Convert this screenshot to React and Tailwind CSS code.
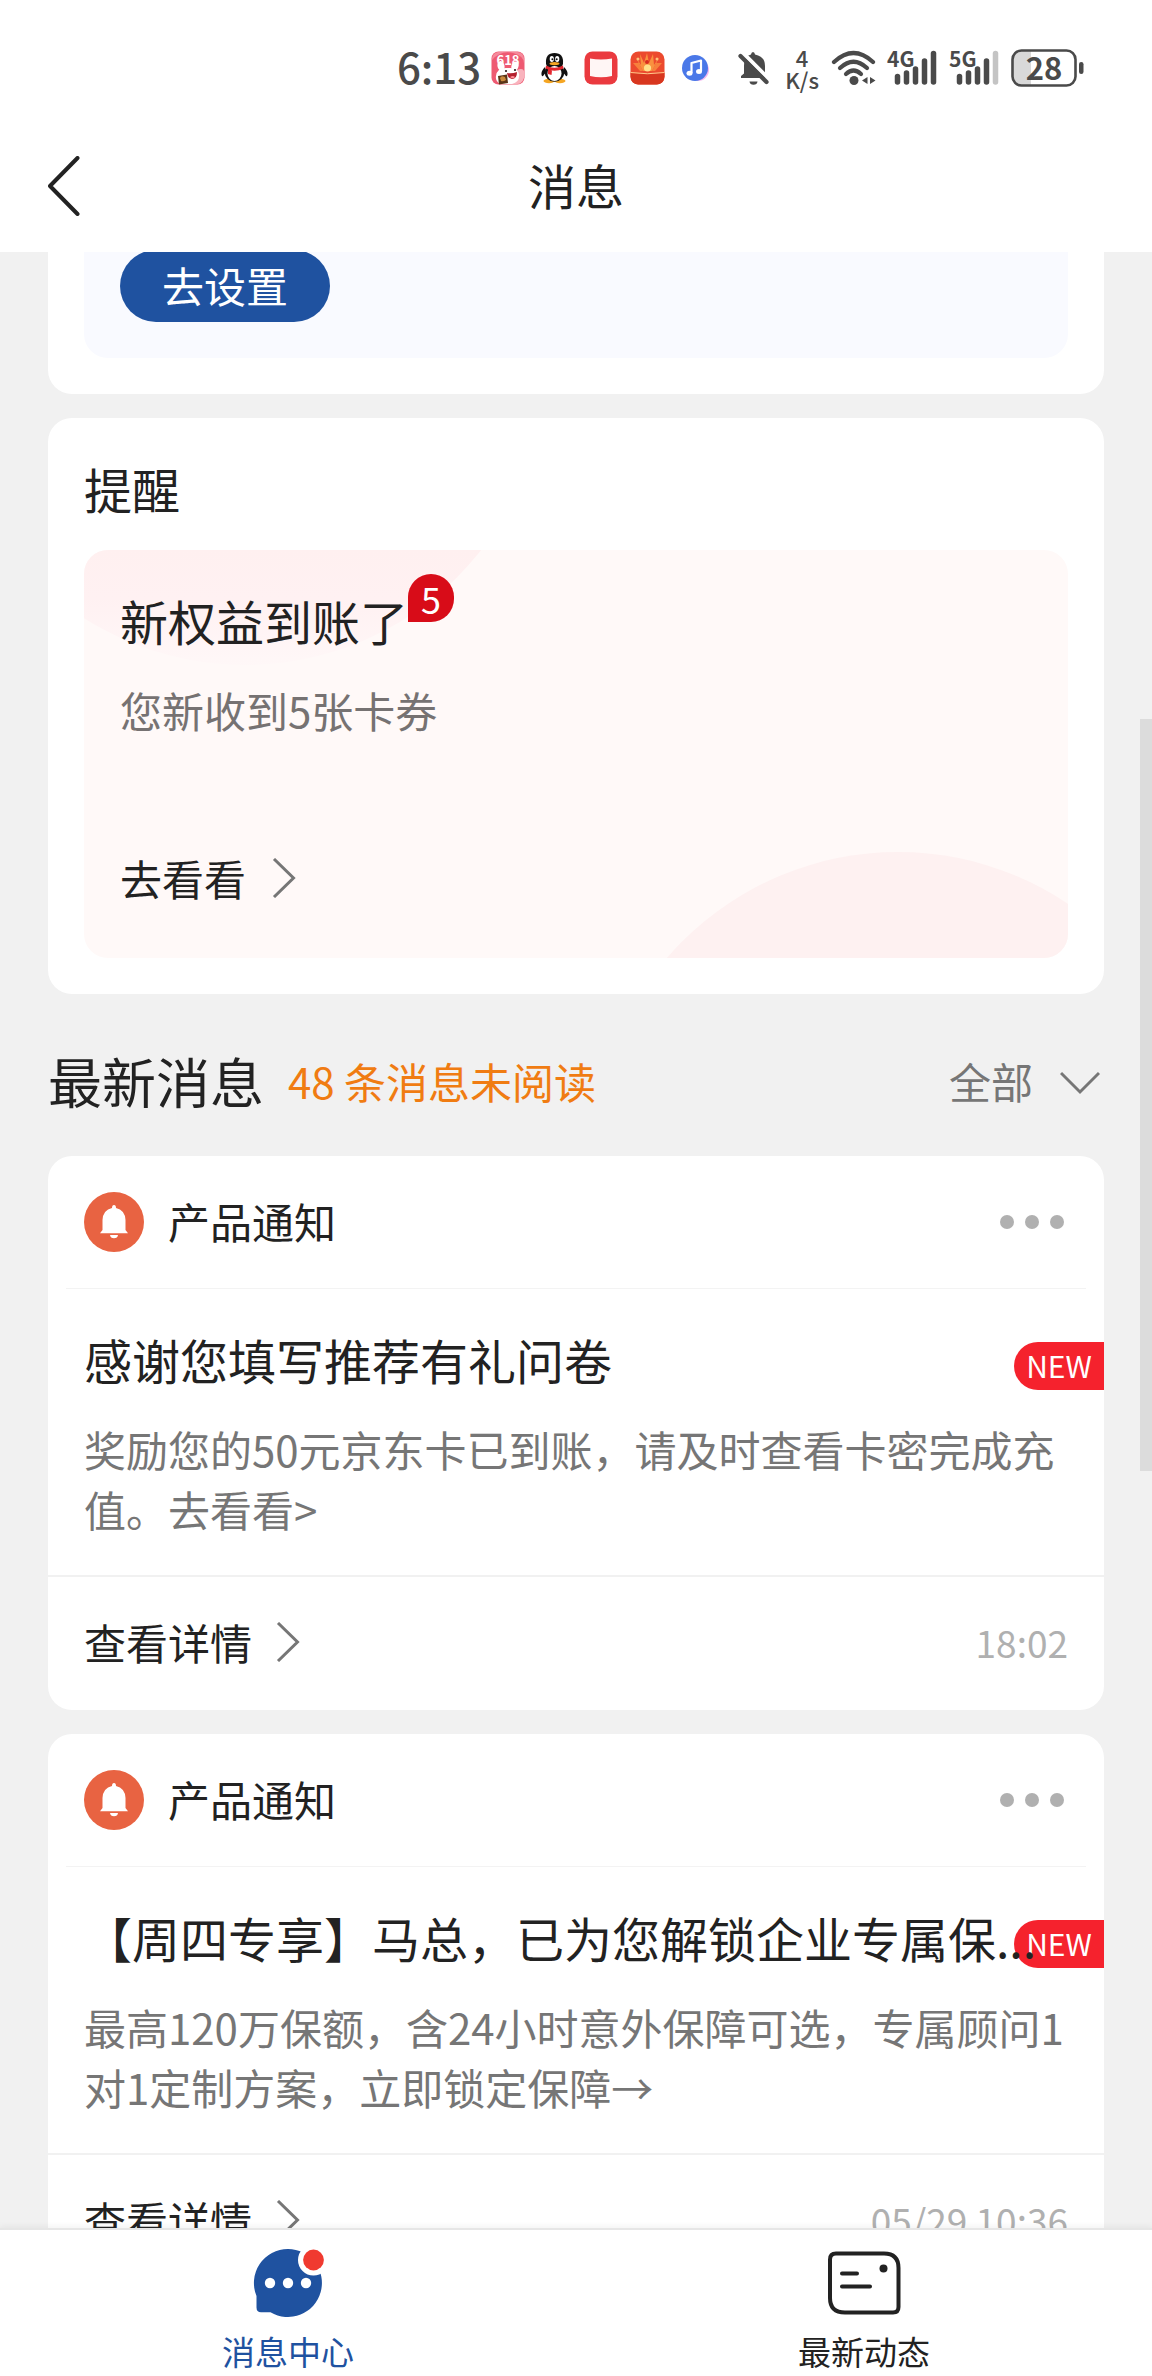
import React from "react";

const messages = [
  {
    id: 1,
    category: "产品通知",
    title: "感谢您填写推荐有礼问卷",
    text: "奖励您的50元京东卡已到账，请及时查看卡密完成充值。去看看>",
    time: "18:02",
  },
  {
    id: 2,
    category: "产品通知",
    title: "【周四专享】马总，已为您解锁企业专属保...",
    text: "最高120万保额，含24小时意外保障可选，专属顾问1对1定制方案，立即锁定保障→",
    time: "05/29 10:36",
  },
];

function ShopIcon() {
  return (
    <svg className="h-[34px] w-[34px]" viewBox="0 0 34 34" aria-hidden="true">
      <rect x="0.5" y="0.5" width="33" height="33" rx="7" fill="#ee5a72" />
      <path d="M1 9Q10 -1 22 2T33 14V7Q32 1 26 1H7Q1 2 1 9Z" fill="#f58a9b" />
      <path d="M23 20Q32 16 33 20V27Q31 33 26 33H18Z" fill="#f9b3bd" />
      <ellipse cx="10" cy="15" rx="3.5" ry="5" fill="#fff" transform="rotate(-15 10 15)" />
      <ellipse cx="24" cy="15" rx="3.5" ry="4.500" fill="#fff" transform="rotate(20 24 15)" />
      <path d="M5 25Q6 16 17 17Q27 16 28 23Q29 31 21 33H9Q4 30 5 25Z" fill="#fff" />
      <text x="17" y="13.500" textAnchor="middle" fontSize="13" fontWeight="700" fill="#fff">618</text>
      <path d="M16 22Q21 23 26 21Q26 28 21 28Q17 28 16 22Z" fill="#b3202e" />
      <path d="M19 26Q22 24 24 26Q22 28.500 19 26Z" fill="#ff8c96" />
      <circle cx="15" cy="20" r="1.100" fill="#2b1a1a" />
      <circle cx="24" cy="19" r="1.100" fill="#2b1a1a" />
      <path d="M7 25L16 23.500L17 32L8 33.500Z" fill="#5a3517" />
      <path d="M9 27Q10 24 14 26L15 29Q12 31 10 30Z" fill="#c98a3d" />
    </svg>
  );
}

function PenguinIcon() {
  return (
    <svg className="h-[32px] w-[27px]" viewBox="0 0 27 32" aria-hidden="true">
      <ellipse cx="8" cy="29" rx="5.500" ry="2.200" fill="#f5a623" />
      <ellipse cx="19" cy="29" rx="5.500" ry="2.200" fill="#f5a623" />
      <path d="M4 15Q-1 20 1 24Q2 25 5 20ZM23 15Q28 20 26 24Q25 25 22 20Z" fill="#111" />
      <ellipse cx="13.500" cy="20.500" rx="9.800" ry="9.200" fill="#111" />
      <path d="M5 12Q4 1 13.500 1T22 12Q21 17 13.500 17T5 12Z" fill="#111" />
      <ellipse cx="13.500" cy="21.500" rx="7" ry="7.600" fill="#fff" />
      <ellipse cx="10.800" cy="7" rx="2.100" ry="3" fill="#fff" />
      <ellipse cx="16.200" cy="7" rx="2.100" ry="3" fill="#fff" />
      <circle cx="11.400" cy="7.300" r="1" fill="#111" />
      <circle cx="15.700" cy="7.300" r="1" fill="#111" />
      <ellipse cx="13.500" cy="11.600" rx="5" ry="1.700" fill="#f5a623" />
      <path d="M5 13.500Q13.500 18 22 13.500L22.500 16.500Q13.500 21 4.500 16.500Z" fill="#e3262e" />
      <path d="M7 17L11 18.500L10.500 23L7 22Z" fill="#e3262e" />
    </svg>
  );
}

function ReaderIcon() {
  return (
    <svg className="h-[34px] w-[34px]" viewBox="0 0 34 34" aria-hidden="true">
      <rect x="0.500" y="0.500" width="33" height="33" rx="8" fill="#ea3a3f" />
      <path d="M6 7.500Q17 9.500 28 7.500V25Q17 27.500 6 25Z" fill="#fff6f5" />
    </svg>
  );
}

function LuckyIcon() {
  return (
    <svg className="h-[34px] w-[35px]" viewBox="0 0 35 34" aria-hidden="true">
      <rect x="0.500" y="0.500" width="34" height="33" rx="8" fill="#ec4a2e" />
      <path d="M5 5L13 20H22L30 5L24 14L23 3L19 12L17 2L14 12L10 3L11 14Z" fill="#f9913f" />
      <path d="M3 12L9 12L13 20H22L26 12L32 12L25 20H10Z" fill="#f7803c" />
      <circle cx="8" cy="8" r="1.500" fill="#ffc07a" />
      <circle cx="27" cy="8" r="1.500" fill="#ffc07a" />
      <circle cx="17.500" cy="17" r="3.600" fill="#ffe08a" />
      <circle cx="17" cy="11" r="2" fill="#d92a20" />
      <path d="M0.500 21.500Q17 24 34.500 21.500V26Q34 33 27 33.500H8Q1 33 0.500 26Z" fill="#d8371f" />
      <path d="M0.500 21.500Q17 24 34.500 21.500" fill="none" stroke="#ffc98a" strokeWidth="1" />
    </svg>
  );
}

function MusicIcon() {
  return (
    <svg className="h-[30px] w-[28px]" viewBox="0 0 28 30" aria-hidden="true">
      <circle cx="17" cy="17" r="11" fill="#f3b7ee" />
      <circle cx="14" cy="15" r="13" fill="#4a78e8" />
      <path d="M10.500 20V10L20 7.500V18" fill="none" stroke="#fff" strokeWidth="2.200" strokeLinejoin="round" />
      <ellipse cx="8.500" cy="20.300" rx="3" ry="2.500" fill="#fff" />
      <ellipse cx="18" cy="18.500" rx="3" ry="2.500" fill="#fff" />
    </svg>
  );
}

function MutedIcon() {
  return (
    <svg className="h-[36px] w-[32px]" viewBox="0 0 32 36" aria-hidden="true">
      <path d="M4 28V26L7 23.500V16Q7 6 14 4.500Q14.300 2 16 2T18 4.500Q28 6.500 28 16V23.500L30 28Z" fill="#4a4a4a" />
      <path d="M12.500 31.500H20.500Q20 34.800 16.500 34.800T12.500 31.500Z" fill="#4a4a4a" />
      <path d="M4 1L32 29" stroke="#fff" strokeWidth="4" />
      <path d="M3.500 6L29.500 32" stroke="#4a4a4a" strokeWidth="4.200" strokeLinecap="round" />
    </svg>
  );
}

function WifiIcon() {
  return (
    <svg className="h-[36px] w-[46px]" viewBox="0 0 46 36" aria-hidden="true">
      <g fill="none" stroke="#4a4a4a" strokeWidth="4.200" strokeLinecap="round">
        <path d="M3 12Q22.500 -6 42 12" />
        <path d="M9 18Q22.500 5.500 36 18" />
        <path d="M15 24Q22.500 17 30 24" />
      </g>
      <circle cx="23" cy="30.500" r="4.500" fill="#4a4a4a" />
      <path d="M36.500 27V34L31 30.500ZM39 27V34L44.500 30.500Z" fill="#4a4a4a" />
    </svg>
  );
}

function SignalIcon({ label, weak }) {
  return (
    <svg className="h-[38px] w-[52px] overflow-visible" viewBox="0 0 52 38" role="img" aria-label={label}>
      <text x="0" y="18" fontSize="21" fontWeight="700" fill="#4a4a4a">{label}</text>
      <g stroke="#4a4a4a" strokeWidth="5.500" strokeLinecap="round">
        <path d="M10.500 27.500V33" />
        <path d="M19.500 24V33" />
        <path d="M28.500 20V33" />
        <path d="M37.500 12V33" />
        <path d="M46.500 4.500V33" stroke={weak ? "#c4c4c4" : "#4a4a4a"} />
      </g>
    </svg>
  );
}

function BatteryIcon() {
  return (
    <svg className="h-[38px] w-[73px] overflow-visible" viewBox="0 0 73 38" role="img" aria-label="28%">
      <path d="M20 2V36H11Q2 36 2 27V11Q2 2 11 2Z" fill="#d9d9d9" />
      <rect x="1.500" y="1.500" width="63" height="35" rx="9" fill="none" stroke="#4a4a4a" strokeWidth="2.600" />
      <rect x="68" y="13" width="4.500" height="12" rx="2.200" fill="#4a4a4a" />
      <text x="33" y="30.500" textAnchor="middle" fontSize="31" fontWeight="700" fill="#4a4a4a">28</text>
    </svg>
  );
}

function StatusBar() {
  return (
    <div className="flex h-[120px] items-center justify-end pr-[68px] pt-4 text-[#4a4a4a]">
      <span className="mr-[10px] pb-1 text-[42px] font-medium leading-[60px]">6:13</span>
      <div className="flex items-center gap-3">
        <ShopIcon />
        <div className="px-1"><PenguinIcon /></div>
        <ReaderIcon />
        <LuckyIcon />
        <div className="pl-1"><MusicIcon /></div>
      </div>
      <div className="ml-7 flex items-center">
        <MutedIcon />
        <div className="ml-4 mr-3 flex flex-col items-center text-[22px] font-medium leading-[22px]">
          <span>4</span>
          <span>K/s</span>
        </div>
        <WifiIcon />
        <div className="ml-[10px] flex items-center gap-[10px]">
          <SignalIcon label="4G" />
          <SignalIcon label="5G" weak />
          <BatteryIcon />
        </div>
      </div>
    </div>
  );
}

function Chevron() {
  return (
    <svg className="h-10 w-6" viewBox="0 0 24 40" fill="none" stroke="#767676" strokeWidth="3" aria-hidden="true">
      <path d="M2 1L21.500 20L2 39" />
    </svg>
  );
}

function ReminderCard() {
  return (
    <section className="mt-6 rounded-3xl bg-white px-9 pb-9 pt-10">
      <h2 className="mb-8 text-[48px] leading-[60px]">提醒</h2>
      <div className="relative overflow-hidden rounded-3xl bg-[#fff9f8] px-9 pb-[50px] pt-10">
        <svg className="absolute left-0 top-0 h-[408px] w-[500px]" viewBox="0 0 500 408" aria-hidden="true">
          <defs>
            <linearGradient id="glow" x1="0" y1="0" x2="0" y2="120" gradientUnits="userSpaceOnUse">
              <stop offset="0" stopColor="#fff0f0" />
              <stop offset="0.400" stopColor="#fff1f2" />
              <stop offset="1" stopColor="#fff8f8" />
            </linearGradient>
          </defs>
          <circle cx="161" cy="-185" r="300" fill="url(#glow)" />
        </svg>
        <svg className="absolute bottom-0 right-0 h-[120px] w-[420px]" viewBox="0 0 420 120" aria-hidden="true">
          <circle cx="250" cy="319" r="305" fill="#fef1f1" />
        </svg>
        <div className="relative">
          <div className="flex">
            <h3 className="relative text-[48px] leading-[60px]">
              新权益到账了
              <span className="absolute -top-4 left-full flex h-12 w-[46px] items-center justify-center rounded-full rounded-bl-none bg-[#d80c18] text-[36px] leading-[48px] text-white">
                5
              </span>
            </h3>
          </div>
          <p className="mt-[30px] text-[42px] leading-[60px] text-[#767272]">您新收到5张卡券</p>
          <button type="button" className="mt-[108px] flex items-center gap-[26px] text-[42px] leading-[60px]">
            去看看
            <Chevron />
          </button>
        </div>
      </div>
    </section>
  );
}

function MessageCard({ message }) {
  return (
    <article className="overflow-hidden rounded-3xl bg-white">
      <header className="flex h-[132px] items-center px-9">
        <svg className="h-[60px] w-[60px]" viewBox="0 0 60 60" aria-hidden="true">
          <circle cx="30" cy="30" r="30" fill="#e86342" />
          <path d="M30 13Q32 13 32 16Q41 18 41.500 28V38L44 41.200H16L18.500 38V28Q19 18 28 16Q28 13 30 13Z" fill="#fff" />
          <path d="M26 43H34Q33.500 46.300 30 46.300T26 43Z" fill="#fff" />
        </svg>
        <span className="ml-6 flex-1 pb-[2px] text-[42px] leading-[60px]">{message.category}</span>
        <button type="button" aria-label="更多" className="flex gap-[11px] px-1 py-4">
          <span className="h-[14px] w-[14px] rounded-full bg-[#b0b0b0]" />
          <span className="h-[14px] w-[14px] rounded-full bg-[#b0b0b0]" />
          <span className="h-[14px] w-[14px] rounded-full bg-[#b0b0b0]" />
        </button>
      </header>
      <div className="mx-[18px] h-px bg-[#f3f3f3]" />
      <div className="relative px-9 pb-9 pt-9">
        <span className="absolute right-0 top-[53px] flex h-12 w-[90px] items-center justify-center rounded-l-full bg-[#f5222d] pb-[2px] text-[30px] leading-[44px] text-white">
          NEW
        </span>
        <h3 className="relative whitespace-nowrap text-[48px] leading-[68px]">{message.title}</h3>
        <p className="mt-[26px] text-[42px] leading-[60px] text-[#767676]">{message.text}</p>
      </div>
      <footer className="flex h-[135px] items-center justify-between border-t-2 border-[#f1f1f1] px-9 pb-1">
        <a href="#detail" className="flex items-center gap-6 text-[42px] leading-[60px]">
          查看详情
          <Chevron />
        </a>
        <time className="text-[37px] leading-[60px] text-[#b0b0b0]">{message.time}</time>
      </footer>
    </article>
  );
}

function BottomNav() {
  return (
    <nav className="relative flex shrink-0 border-t-2 border-[#e6e6e6] bg-white pb-[3px] pt-[19px] shadow-[0_-2px_6px_rgba(0,0,0,0.05)]">
      <button type="button" className="flex flex-1 flex-col items-center gap-3 text-[33px] leading-[44px] text-[#1f52a0]">
        <svg className="h-[68px] w-[72px]" viewBox="0 0 72 68" aria-hidden="true">
          <path d="M36 0A34 34 0 1 1 18.500 63.200H9Q4.500 63.200 4.500 58.500V47A34 34 0 0 1 36 0Z" fill="#1f52a0" />
          <circle cx="18" cy="34" r="5.200" fill="#fff" />
          <circle cx="36" cy="34" r="5.200" fill="#fff" />
          <circle cx="54" cy="34" r="5.200" fill="#fff" />
          <circle cx="61.500" cy="11" r="15.500" fill="#fff" />
          <circle cx="61.500" cy="11" r="10.400" fill="#f03a30" />
        </svg>
        消息中心
      </button>
      <button type="button" className="flex flex-1 flex-col items-center gap-3 text-[33px] leading-[44px] text-[#222]">
        <svg className="h-[68px] w-[76px]" viewBox="0 0 76 68" fill="none" stroke="#222" strokeWidth="4" strokeLinecap="round" aria-hidden="true">
          <path d="M10 4.500H58Q72.500 4.500 72.500 19V58Q72.500 63.500 67 63.500H19Q4 63.500 4 49V10.500Q4 4.500 10 4.500Z" />
          <path d="M16 24.500H31M16 37.500H44" />
          <circle cx="57.500" cy="19.500" r="4" fill="#222" stroke="none" />
        </svg>
        最新动态
      </button>
    </nav>
  );
}

export default function App() {
  return (
    <div className="flex h-screen flex-col overflow-hidden bg-[#f1f1f1] font-['Noto_Sans_CJK_SC',sans-serif] text-[#222]" lang="zh-CN">
      <div className="shrink-0 bg-white">
        <StatusBar />
        <header className="grid h-[132px] grid-cols-[1fr_auto_1fr] items-center px-12">
          <button type="button" aria-label="返回" className="justify-self-start">
            <svg className="h-[60px] w-8" viewBox="0 0 32 60" fill="none" stroke="#222" strokeWidth="4" strokeLinecap="round" strokeLinejoin="round" aria-hidden="true">
              <path d="M29.500 2L2 30L29.500 58" />
            </svg>
          </button>
          <h1 className="pb-1 text-[48px] leading-[60px]">消息</h1>
        </header>
      </div>

      <main className="relative min-h-0 flex-1 overflow-hidden px-12">
        <section className="rounded-b-3xl bg-white px-9 pb-9">
          <div className="flex rounded-b-3xl bg-[#f9faff] px-9 pb-9">
            <button type="button" className="-mt-0.5 flex h-[72px] w-[210px] items-center justify-center rounded-full bg-[#1f52a0] pb-[2px] text-[42px] leading-[60px] text-white">
              去设置
            </button>
          </div>
        </section>

        <ReminderCard />

        <div className="flex h-[162px] items-center gap-6 pt-3">
          <h2 className="text-[54px] leading-[72px]">最新消息</h2>
          <span className="flex-1 text-[42px] leading-[60px] text-[#f07c12]">48 条消息未阅读</span>
          <div className="relative text-[#767676]">
            <select aria-label="消息筛选" className="block appearance-none bg-transparent pr-[70px] text-[42px] leading-[60px]">
              <option>全部</option>
            </select>
            <svg className="pointer-events-none absolute right-1 top-5 h-6 w-10" viewBox="0 0 40 24" fill="none" stroke="#767676" strokeWidth="3" aria-hidden="true">
              <path d="M1 2L20 21L39 2" />
            </svg>
          </div>
        </div>

        <div className="flex flex-col gap-6">
          {messages.map((m) => (
            <MessageCard key={m.id} message={m} />
          ))}
        </div>

        <div className="absolute right-0 top-[467px] h-[752px] w-3 bg-[#dcdcdc]" />
      </main>

      <BottomNav />
    </div>
  );
}
